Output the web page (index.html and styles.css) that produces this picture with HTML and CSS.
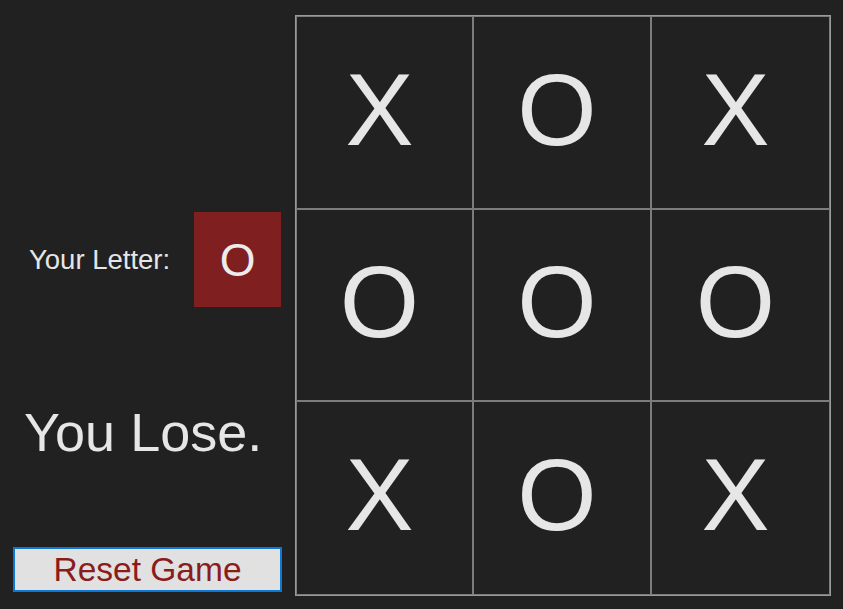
FILE: index.html
```html
<!DOCTYPE html>
<html>
<head>
<meta charset="utf-8">
<link rel="stylesheet" href="styles.css">
</head>
<body>
<div class="app">
  <div class="side">
    <div class="letter-row">
      <span class="letter-label">Your Letter:</span>
      <div class="letter-box">O</div>
    </div>
    <div class="status">You Lose.</div>
    <button class="reset">Reset Game</button>
  </div>
  <div class="board">
    <div class="cell">X</div>
    <div class="cell">O</div>
    <div class="cell">X</div>
    <div class="cell">O</div>
    <div class="cell">O</div>
    <div class="cell">O</div>
    <div class="cell">X</div>
    <div class="cell">O</div>
    <div class="cell">X</div>
  </div>
</div>
</body>
</html>
```
FILE: styles.css
```css
html, body {
  margin: 0;
  padding: 0;
  background: #212121;
  width: 843px;
  height: 609px;
  overflow: hidden;
  font-family: "Liberation Sans", Arial, sans-serif;
  color: #e6e6e6;
}
.app {
  display: flex;
  align-items: flex-start;
}
.side {
  width: 295px;
  display: flex;
  flex-direction: column;
  padding-top: 212px;
}
.letter-row {
  display: flex;
  align-items: center;
  height: 95px;
  padding-left: 29px;
  gap: 24px;
}
.letter-label {
  font-size: 27.5px;
  color: #e6e6e6;
}
.letter-box {
  width: 87px;
  height: 95px;
  background: #7f1f1f;
  display: flex;
  align-items: center;
  justify-content: center;
  font-size: 46px;
  color: #ececec;
}
.status {
  margin-top: 95px;
  padding-left: 24px;
  font-size: 54px;
  line-height: 60px;
  color: #e6e6e6;
}
.reset {
  margin-top: 85px;
  margin-left: 13px;
  width: 269px;
  height: 45px;
  box-sizing: border-box;
  border: 2px solid #0a78d4;
  background: #e1e1e1;
  color: #8a1c1c;
  font-family: "Liberation Sans", Arial, sans-serif;
  font-size: 33.5px;
  padding: 0;
  line-height: 41px;
}
.board {
  margin-top: 15px;
  box-sizing: border-box;
  width: 536px;
  height: 581px;
  border: 1px solid #9a9a9a;
  display: grid;
  grid-template-columns: 177px 178px 179px;
  grid-template-rows: 193px 192px 194px;
}
.cell {
  box-sizing: border-box;
  border: 1px solid #7c7c7c;
  display: flex;
  align-items: center;
  justify-content: center;
  padding-right: 10px;
  padding-bottom: 6px;
  font-size: 102px;
  color: #e6e6e6;
  line-height: 1;
}
```
